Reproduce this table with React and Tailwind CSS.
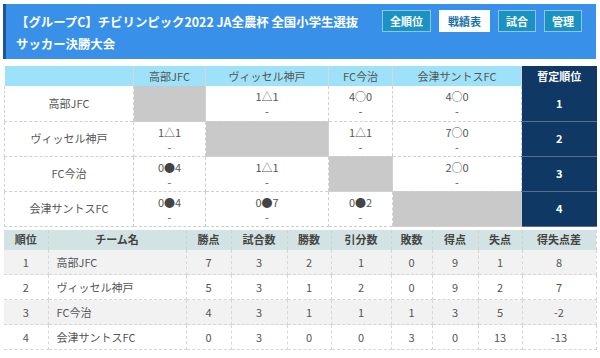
import React from 'react'

const teams = ['高部JFC', 'ヴィッセル神戸', 'FC今治', '会津サントスFC']

// matrix results: null = self
const matrix = [
  [null, '1△1', '4○0', '4○0'],
  ['1△1', null, '1△1', '7○0'],
  ['0●4', '1△1', null, '2○0'],
  ['0●4', '0●7', '0●2', null],
]

const standings = [
  [1, '高部JFC', 7, 3, 2, 1, 0, 9, 1, 8],
  [2, 'ヴィッセル神戸', 5, 3, 1, 2, 0, 9, 2, 7],
  [3, 'FC今治', 4, 3, 1, 1, 1, 3, 5, -2],
  [4, '会津サントスFC', 0, 3, 0, 0, 3, 0, 13, -13],
]

const matrixCols = ['w-[129px]', 'w-[72px]', 'w-[123px]', 'w-[64px]', 'w-[129px]', 'w-[75px]']
const standCols = ['w-[44px]', 'w-[138px]', 'w-[45px]', 'w-[56px]', 'w-[44px]', 'w-[60px]', 'w-[41px]', 'w-[46px]', 'w-[44px]', 'w-[74px]']
const standHeads = ['順位', 'チーム名', '勝点', '試合数', '勝数', '引分数', '敗数', '得点', '失点', '得失点差']

const font = { fontFamily: '"Noto Sans CJK JP", "Noto Sans", sans-serif' }

function Score({ v }) {
  const m = v.match(/^(\d+)(.)(\d+)$/)
  return (
    <span>
      {m[1]}
      <span className={m[2] === '●' ? 'text-[#444]' : ''}>{m[2]}</span>
      {m[3]}
    </span>
  )
}

export default function App() {
  return (
    <div className="w-[600px] h-[358px] bg-white overflow-hidden" style={font}>
      {/* Header */}
      <div className="ml-[3px] mt-[4px] w-[593px] h-[55px] bg-[#3990e8] border-l-[3px] border-[#1b5798] flex justify-between">
        <h1 className="pl-[10px] pt-[7px] whitespace-nowrap text-white font-bold text-[12.4px] leading-[22px]">
          【グループC】チビリンピック2022 JA全農杯 全国小学生選抜<br />
          サッカー決勝大会
        </h1>
        <div className="flex gap-[8px] pt-[6px] pr-[14px] items-start">
          <button className="h-[22px] px-[7px] bg-[#1a92c4] border border-[#8fc4e2] text-white font-bold text-[11px]">全順位</button>
          <button className="h-[22px] px-[8px] bg-white border border-white text-[#1a6fa8] font-bold text-[11px]">戦績表</button>
          <button className="h-[22px] px-[7px] bg-[#1a92c4] border border-[#8fc4e2] text-white font-bold text-[11px]">試合</button>
          <button className="h-[22px] px-[7px] bg-[#1a92c4] border border-[#8fc4e2] text-white font-bold text-[11px]">管理</button>
        </div>
      </div>

      {/* Match matrix */}
      <table className="ml-[4px] mt-[7px] w-[592px] table-fixed border-collapse text-[11px] text-[#555]">
        <thead>
          <tr className="h-[20px] bg-[#9de2f9]">
            <th className={`${matrixCols[0]} border-r border-[#d8d8d8]`}></th>
            {teams.map((t, i) => (
              <th key={t} className={`${matrixCols[i + 1]} font-normal border-r border-[#d8d8d8]`}>{t}</th>
            ))}
            <th className={`${matrixCols[5]} bg-[#0f3864] text-white font-bold`}>暫定順位</th>
          </tr>
        </thead>
        <tbody>
          {matrix.map((row, r) => (
            <tr key={r} className="h-[35px]">
              <td className="text-center border-r border-b border-dashed border-[#d0d0d0] border-l border-l-solid">{teams[r]}</td>
              {row.map((v, c) =>
                v === null ? (
                  <td key={c} className="bg-[#c9c9c9] border-r border-b border-[#d0d0d0]"></td>
                ) : (
                  <td key={c} className="text-center align-top pt-[3px] leading-[15px] border-r border-b border-dashed border-[#d0d0d0]">
                    <div><Score v={v} /></div>
                    <div>-</div>
                  </td>
                )
              )}
              <td className="bg-[#0f3864] text-white font-bold text-center border-b border-[#5a6f88]">{r + 1}</td>
            </tr>
          ))}
        </tbody>
      </table>

      {/* Standings */}
      <table className="ml-[4px] mt-[3px] w-[592px] table-fixed border-collapse text-[11px] text-[#555]">
        <thead>
          <tr className="h-[20px] bg-[#d3e2e2]">
            {standHeads.map((h, i) => (
              <th key={h} className={`${standCols[i]} font-bold text-[#444] border-r border-dashed border-[#c8d4d4]`}>{h}</th>
            ))}
          </tr>
        </thead>
        <tbody>
          {standings.map((row, r) => (
            <tr key={r} className={`h-[25px] ${r % 2 === 0 ? 'bg-[#f2f2f2]' : 'bg-white'}`}>
              {row.map((v, c) => (
                <td key={c} className={`${c === 1 ? 'text-left pl-[8px]' : 'text-center'} border-r border-b border-dashed border-[#d6d6d6]`}>{v}</td>
              ))}
            </tr>
          ))}
        </tbody>
      </table>
    </div>
  )
}
